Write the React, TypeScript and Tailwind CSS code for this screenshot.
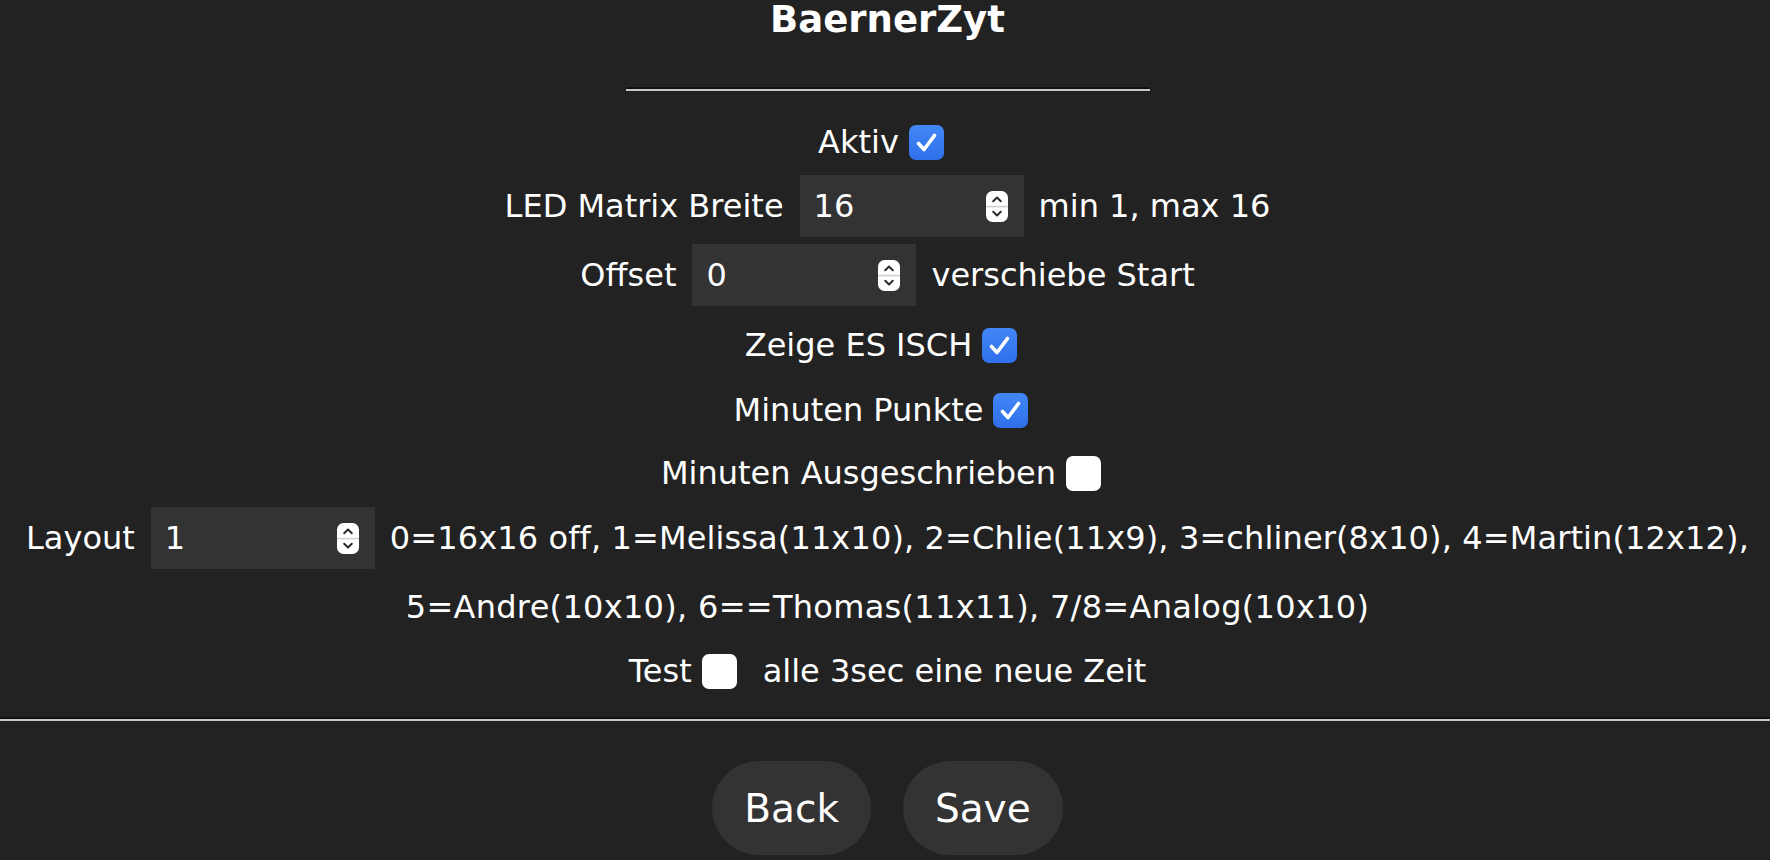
import React from "react";

const FONT = { fontFamily: '"DejaVu Sans", Verdana, sans-serif' };

function Checkbox({ checked, trailing = true }: { checked: boolean; trailing?: boolean }) {
    return (
        <span className={`ml-[10px] ${trailing ? "mr-[13px]" : ""} inline-flex h-[35px] w-[35px] shrink-0 items-center justify-center rounded-[7px] ${checked ? "bg-gradient-to-b from-[#4287f7] to-[#2f6fe9]" : "bg-white"}`}>
            {checked && (
                <svg width="35" height="35" viewBox="0 0 35 35">
                    <path d="M9.5 18.5 L15 24.5 L25.5 10.5" stroke="#fff" strokeWidth="3.6" fill="none" strokeLinecap="round" strokeLinejoin="round" />
                </svg>
            )}
        </span>
    );
}

function Spinner() {
    return (
        <svg width="22" height="31" viewBox="0 0 22 31">
            <rect x="0" y="0" width="22" height="31" rx="6.5" fill="#fff" />
            <rect x="0" y="14.8" width="22" height="1.6" fill="#cfcfcf" />
            <path d="M7.2 10.2 L11 6.6 L14.8 10.2" stroke="#2a2a2a" strokeWidth="2" fill="none" strokeLinecap="round" strokeLinejoin="round" />
            <path d="M7.2 20.8 L11 24.4 L14.8 20.8" stroke="#2a2a2a" strokeWidth="2" fill="none" strokeLinecap="round" strokeLinejoin="round" />
        </svg>
    );
}

function NumberBox({ value }: { value: string }) {
    return (
        <div className="flex h-[62px] w-[224px] shrink-0 items-center justify-between bg-[#333333] pl-[14px] pr-[16px]">
            <span className="leading-none text-white">{value}</span>
            <Spinner />
        </div>
    );
}

function Row({ h, children }: { h: string; children: React.ReactNode }) {
    return <div className={`flex ${h} items-center justify-center whitespace-nowrap leading-none`}>{children}</div>;
}

export default function App() {
    return (
        <div className="min-h-[860px] w-full bg-[#222222] text-[32px] text-white" style={FONT}>
            <div className="pl-[5px]">
                {/* Title */}
                <div className="h-[87px] text-center">
                    <h1 className="text-[37px] font-bold leading-[40px]">BaernerZyt</h1>
                </div>
                <div className="mx-auto w-[524px] border-t-2 border-b-2 border-t-[#111111] border-b-[#c6c6c6]" />

                {/* Settings */}
                <div className="mt-[19px]">
                    <Row h="h-[64px]">
                        <span>Aktiv</span>
                        <Checkbox checked />
                    </Row>
                    <Row h="h-[64px]">
                        <span>LED Matrix Breite</span>
                        <span className="ml-[16px]"><NumberBox value="16" /></span>
                        <span className="ml-[15px]">min 1, max 16</span>
                    </Row>
                    <Row h="h-[74px]">
                        <span>Offset</span>
                        <span className="ml-[16px]"><NumberBox value="0" /></span>
                        <span className="ml-[15px]">verschiebe Start</span>
                    </Row>
                    <Row h="h-[66px]">
                        <span>Zeige ES ISCH</span>
                        <Checkbox checked />
                    </Row>
                    <Row h="h-[64px]">
                        <span>Minuten Punkte</span>
                        <Checkbox checked />
                    </Row>
                    <Row h="h-[62px]">
                        <span>Minuten Ausgeschrieben</span>
                        <Checkbox checked={false} />
                    </Row>
                    <Row h="h-[68px]">
                        <span>Layout</span>
                        <span className="ml-[16px]"><NumberBox value="1" /></span>
                        <span className="ml-[15px] tracking-[0.12px]">0=16x16 off, 1=Melissa(11x10), 2=Chlie(11x9), 3=chliner(8x10), 4=Martin(12x12),</span>
                    </Row>
                    <Row h="h-[70px]">
                        <span className="tracking-[0.3px]">5=Andre(10x10), 6==Thomas(11x11), 7/8=Analog(10x10)</span>
                    </Row>
                    <Row h="h-[58px]">
                        <span>Test</span>
                        <Checkbox checked={false} trailing={false} />
                        <span className="ml-[26px]">alle 3sec eine neue Zeit</span>
                    </Row>
                </div>
            </div>

            <div className="mt-[17px] w-full border-t-2 border-b-2 border-t-[#111111] border-b-[#c6c6c6]" />

            {/* Buttons */}
            <div className="mt-[40px] flex justify-center gap-[32px] pl-[5px]">
                <button className="h-[94px] rounded-full bg-[#333333] px-[32px] text-[39px] leading-none text-white">Back</button>
                <button className="h-[94px] rounded-full bg-[#333333] px-[32px] text-[39px] leading-none text-white">Save</button>
            </div>
        </div>
    );
}
